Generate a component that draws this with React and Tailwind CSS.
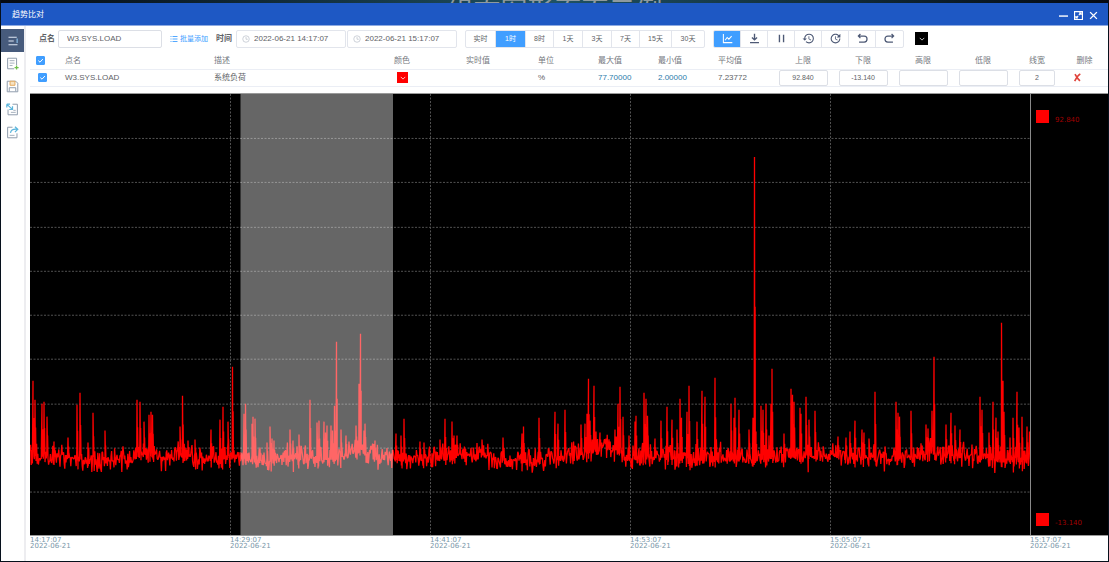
import React, { useState } from "react";
import { MdHistory, MdUpdate } from "react-icons/md";

const SPIKES = [
  [33, 380], [35, 399], [42, 403], [44, 401], [47, 416], [54, 441], [68, 437], [77, 404], [80, 392], [88, 442],
  [93, 412], [105, 430], [137, 399], [140, 401], [144, 421], [149, 414], [151, 411], [152.5, 414], [180, 426],
  [182.5, 395], [188, 440], [195, 439], [211, 429], [220, 419], [223, 406], [228, 421], [232.5, 366], [244, 413],
  [245.5, 403], [252, 423], [253, 416], [255, 418], [260, 447], [267, 442], [270, 426], [272, 438], [274, 440],
  [290, 429], [293, 440], [299, 434], [310, 399], [317, 422], [319, 420], [324, 421], [325.5, 432], [327, 425],
  [331, 425], [332.5, 430], [334.5, 405], [336.5, 341], [341, 429], [346, 435], [349, 441], [356, 425],
  [359, 383], [360.5, 333], [364, 430], [365, 423], [375, 440], [396, 433], [401, 435], [404, 418], [420, 441],
  [424, 442], [440, 439], [445, 418], [452, 421], [454, 435], [457, 435], [482, 439], [503, 437], [522, 433],
  [523.5, 426], [539, 417], [555, 411], [558, 423], [565, 409], [581, 424], [585, 423], [587, 413], [588.5, 378],
  [590, 420], [594, 385], [596, 431], [600, 432], [615, 429], [618, 403], [620, 386], [623, 416], [629, 435],
  [635, 421], [636, 415], [644, 392], [646, 398], [647.5, 415], [655, 438], [661, 420], [667, 406], [672, 419],
  [677, 429], [680, 398], [681.5, 417], [687, 411], [689, 385], [697, 421], [702, 390], [705, 396], [715, 377],
  [731, 403], [734, 417], [735, 397], [739, 409], [749, 429], [753, 417], [754.5, 156], [756, 431], [761, 405],
  [763, 409], [766, 403], [769, 435], [771, 403], [772, 368], [784, 433], [791, 388], [792.5, 394], [794, 401],
  [800, 407], [801, 413], [806, 396], [809, 419], [815, 410], [838, 436], [846, 437], [850, 431], [855, 420],
  [862, 429], [864, 432], [869, 438], [875, 391], [896, 401], [898, 412], [899.5, 416], [911, 410], [926, 424],
  [928, 428], [932, 410], [934, 356], [946, 424], [951, 412], [955, 425], [960, 429], [980, 396], [982, 409],
  [989, 432], [993, 401], [996, 417], [998, 431], [1001.5, 322], [1003, 380], [1004, 411], [1010, 437],
  [1013, 417], [1017, 391], [1019, 427], [1022, 416], [1027, 426], [1029.5, 431],
];

const BASELINE = [
  [30, 455], [60, 453], [90, 459], [110, 460], [130, 456], [150, 451], [165, 459], [180, 452], [200, 457], [232, 455],
  [250, 455], [265, 459], [300, 456], [340, 455], [358, 446], [366, 450], [380, 456], [400, 457], [440, 455],
  [460, 453], [480, 452], [495, 458], [530, 459], [560, 455], [585, 450], [600, 446], [615, 447], [625, 455],
  [650, 455], [700, 456], [740, 457], [790, 453], [830, 453], [870, 455], [890, 458], [905, 455], [920, 456],
  [928, 447], [940, 453], [970, 454], [1000, 458], [1030, 457],
];

function baselineAt(x) {
  for (let i = 1; i < BASELINE.length; i++) {
    const [x1, y1] = BASELINE[i];
    const [x0, y0] = BASELINE[i - 1];
    if (x <= x1) return y0 + ((y1 - y0) * (x - x0)) / (x1 - x0);
  }
  return 456;
}

function buildSeries() {
  let seed = 4711;
  const rand = () => {
    seed = (seed * 1664525 + 1013904223) % 4294967296;
    return seed / 4294967296;
  };
  const pts = [];
  for (let x = 30; x <= 1030; x += 0.6) {
    const n = rand() + rand() - 1;
    const burst = rand() > 0.94 ? (rand() - 0.6) * 16 : 0;
    pts.push([x, baselineAt(x) + 1 + n * 14 + burst]);
  }
  for (const [x, y] of SPIKES) {
    const b = baselineAt(x);
    pts.push([x - 0.7, b + 4], [x, y], [x + 0.6, y + (b - y) * 0.5], [x + 1, b + 2]);
  }
  pts.sort((a, b) => a[0] - b[0]);
  return pts.map(([x, y]) => `${x.toFixed(1)},${y.toFixed(1)}`).join(" ");
}

const SERIES = buildSeries();
const H_LINES = [137, 181, 226, 270, 314, 358, 403, 447, 491];
const V_LINES = [230, 430, 630, 830];
const TICKS = ["14:17:07", "14:29:07", "14:41:07", "14:53:07", "15:05:07"];
const RANGES = [
  ["实时", "w-[30px]"], ["1时", "w-[30px]"], ["8时", "w-[28px]"], ["1天", "w-[29px]"],
  ["3天", "w-[29px]"], ["7天", "w-[28px]"], ["15天", "w-[32px]"], ["30天", "w-[32px]"],
];

const S = ({ children, className = "size-[11px]", sw = 1.5 }) => (
  <svg viewBox="0 0 16 16" className={className} fill="none" stroke="currentColor" strokeWidth={sw} aria-hidden="true">
    {children}
  </svg>
);

const TOOLS = [
  ["曲线", <S><path d="M2 1.5V14h13M4.5 10.500 7.500 6.500l2.500 2.500 4-4.500" /></S>],
  ["下载", <S sw={2}><path d="M8 1v9M4.3 6.5 8 10l3.700-3.500M1.500 14h13" /></S>],
  ["暂停", <S sw={2}><path d="M5 2.500v11M11 2.500v11" /></S>],
  ["后退", <MdHistory className="size-[13px]" />],
  ["前进", <MdUpdate className="size-[13px]" />],
  ["撤销", <S sw={1.8}><path d="M5 1.500 2 4.500l3 3M2 4.500h8.500a4 4.300 0 0 1 0 8.800H3" /></S>],
  ["重做", <S sw={1.8}><path d="M11 1.500l3 3-3 3M14 4.500H5.500a4 4.300 0 0 0 0 8.800H13" /></S>],
];

const SIDE = [
  ["菜单", <S className="size-[12px]"><path d="M2 3h11M2 8h7M2 13h12" stroke="#dfe8f3" /><path d="M13.500 4.500v6" stroke="#8fc4ef" /></S>],
  ["新建", <S className="size-[13px]" sw={1.2}><path d="M10 14.500H2v-13h11V10" stroke="#8d9aab" /><path d="M4.500 4.500h6M4.500 7.500h6M4.500 10.500h3.500" stroke="#a5afbc" /><path d="M13 10.500v5M10.500 13h5" stroke="#6fbf4a" strokeWidth="1.600" /></S>],
  ["保存", <S className="size-[13px]" sw={1.2}><path d="M1.500 1.500H12l2.500 2.500v10.500h-13z" stroke="#8d9aab" /><path d="M5 1.500v5h6v-5z" stroke="#e3a95b" fill="#f6e3c4" /><path d="M4 14V9.500h8V14" stroke="#8d9aab" /></S>],
  ["导入", <S className="size-[13px]" sw={1.2}><path d="M8 1.500h6v13H2.500V8" stroke="#8d9aab" /><path d="M1 1.500h4M1 1.500v4M1.500 2l6 5.500M8 4v4H4" stroke="#5bb5dc" strokeWidth="1.500" /><path d="M9 9h3M6 11.500h6" stroke="#a5afbc" /></S>],
  ["导出", <S className="size-[13px]" sw={1.2}><path d="M8 1.500H2v13h11.500V9" stroke="#8d9aab" /><path d="M5.500 8.500C6 5 9 3.500 14 4M11 1l3.500 3L11 7.500" stroke="#5bb5dc" strokeWidth="1.500" /><path d="M4.500 11.500h6" stroke="#a5afbc" /></S>],
];

const Clock = () => (
  <S className="size-[8px] shrink-0 text-[#b4bac4]" sw={1.3}>
    <circle cx="8" cy="8" r="6.500" />
    <path d="M8 4v4.500h3.500" />
  </S>
);

const Chevron = () => (
  <S className="size-[6px]" sw={2}>
    <path d="m2 5 6 6 6-6" />
  </S>
);

function DateBox({ label, value }) {
  return (
    <label className="flex h-[18px] w-[110px] items-center gap-1 rounded-xs border border-[#e2e5ec] pl-[5px]">
      <Clock />
      <input aria-label={label} defaultValue={value} className="w-full min-w-0 outline-none" />
    </label>
  );
}

function Check({ label, className }) {
  const [on, setOn] = useState(true);
  return (
    <label className={`relative block size-[9px] ${className}`}>
      <input
        type="checkbox"
        aria-label={label}
        checked={on}
        onChange={() => setOn(!on)}
        className="block size-[9px] appearance-none rounded-[1px] border border-[#409eff] checked:bg-[#409eff]"
      />
      {on && (
        <svg viewBox="0 0 9 9" className="pointer-events-none absolute inset-0 size-[9px]" fill="none" stroke="#fff" aria-hidden="true">
          <path d="M2.300 4.600 4 6.200 6.900 3" />
        </svg>
      )}
    </label>
  );
}

const NumBox = ({ label, value, className = "w-[49px]" }) => (
  <input
    aria-label={label}
    defaultValue={value}
    className={`mx-auto block h-[16px] rounded-xs border border-[#dcdfe6] text-center text-[7px] outline-none ${className}`}
  />
);

export default function App() {
  const [range, setRange] = useState("1时");
  return (
    <div className="flex h-screen flex-col bg-[#06101c] px-px pb-px font-['Liberation_Sans','Noto_Sans_CJK_SC',sans-serif] text-[8px] leading-[12px] text-[#606266]">
      <div className="flex h-[3px] shrink-0 justify-center overflow-hidden bg-linear-to-r from-[#050a14] via-[#1f5263] to-[#050a14] text-[27px] leading-[24px] text-[#8f9a9e]">
        组态图形页面示例
      </div>
      <div className="flex min-h-0 flex-1 flex-col bg-white">
        <header className="flex h-[23px] shrink-0 items-center justify-between border-b border-[#8eaae2] bg-[#1e58c4] pt-[2px] pr-[10px] pl-[11px] text-white">
          <h1>趋势比对</h1>
          <div className="flex items-center gap-[6px]">
            <button aria-label="最小化"><S className="size-[9px]" sw={2.500}><path d="M0 9h16" /></S></button>
            <button aria-label="最大化">
              <S className="size-[9px]" sw={2}><path d="M1 1h14v14H1zM8.500 7.500l4-4M9 3.500h3.500V7M7.500 8.500l-4 4M3.500 9v3.500H7" /></S>
            </button>
            <button aria-label="关闭"><S className="size-[9px]" sw={2.500}><path d="m2 2 12 12M14 2 2 14" /></S></button>
          </div>
        </header>

        <div className="flex min-h-0 flex-1">
          <nav className="flex w-[25px] shrink-0 flex-col border-r-2 border-[#ededf0] pt-[3px]">
            {SIDE.map(([label, icon], i) => (
              <button
                key={label}
                aria-label={label}
                className={`flex h-[23px] items-center justify-center ${i === 0 ? "bg-[#475b7c]" : ""}`}
              >
                {icon}
              </button>
            ))}
          </nav>

          <main className="flex min-w-0 flex-1 flex-col pl-1">
            <div className="flex h-[25px] shrink-0 items-center pl-[9px]">
              <label htmlFor="point" className="w-[19px] font-bold">点名</label>
              <input
                id="point"
                defaultValue="W3.SYS.LOAD"
                className="h-[18px] w-[104px] rounded-xs border border-[#dcdfe6] pl-[8px] outline-none"
              />
              <button className="ml-[8px] flex items-center gap-[2px] text-[7px] text-[#409eff]">
                <S className="size-[8px]" sw={1.800}><path d="M5 3h10M5 8h10M5 13h10M1 3h2M1 8h2M1 13h2" /></S>
                批量添加
              </button>
              <span className="mr-[4px] ml-[8px] font-bold">时间</span>
              <div className="flex gap-[1px]">
                <DateBox label="开始时间" value="2022-06-21 14:17:07" />
                <DateBox label="结束时间" value="2022-06-21 15:17:07" />
              </div>
              <div className="ml-[8px] flex h-[18px] overflow-hidden rounded-xs border border-[#e2e5ec] text-[7px]">
                {RANGES.map(([name, w]) => (
                  <button
                    key={name}
                    onClick={() => setRange(name)}
                    className={`${w} border-r border-[#e2e5ec] last:border-r-0 ${range === name ? "bg-[#409eff] text-white" : ""}`}
                  >
                    {name}
                  </button>
                ))}
              </div>
              <div className="ml-[8px] flex h-[18px] overflow-hidden rounded-xs border border-[#e2e5ec] text-[#4d5975]">
                {TOOLS.map(([label, icon], i) => (
                  <button
                    key={label}
                    aria-label={label}
                    className={`flex w-[27px] items-center justify-center border-r border-[#e2e5ec] last:border-r-0 ${i === 0 ? "bg-[#409eff] text-white" : ""}`}
                  >
                    {icon}
                  </button>
                ))}
              </div>
              <button aria-label="背景颜色" className="ml-[11px] flex size-[13px] items-center justify-center bg-black text-white">
                <Chevron />
              </button>
            </div>

            <table className="w-full shrink-0 table-fixed border-collapse text-left">
              <colgroup>
                <col className="w-[35px]" /><col className="w-[149px]" /><col />
                <col className="w-[72px]" /><col className="w-[72px]" /><col className="w-[60px]" />
                <col className="w-[60px]" /><col className="w-[60px]" /><col className="w-[55px]" />
                <col className="w-[60px]" /><col className="w-[60px]" /><col className="w-[60px]" />
                <col className="w-[60px]" /><col className="w-[48px]" /><col className="w-[47px]" />
              </colgroup>
              <thead>
                <tr className="h-[18px] border-b border-[#ebeef5] text-[#74777e] *:pt-[2px] *:font-normal">
                  <th><Check label="全选" className="ml-[6px]" /></th>
                  <th>点名</th><th>描述</th><th>颜色</th><th>实时值</th><th>单位</th>
                  <th>最大值</th><th>最小值</th><th>平均值</th>
                  <th className="text-center">上限</th><th className="text-center">下限</th>
                  <th className="text-center">高限</th><th className="text-center">低限</th>
                  <th className="text-center">线宽</th><th className="text-center">删除</th>
                </tr>
              </thead>
              <tbody>
                <tr className="h-[17px] border-b border-[#ebeef5]">
                  <td><Check label="W3.SYS.LOAD" className="ml-[8px]" /></td>
                  <td>W3.SYS.LOAD</td>
                  <td>系统负荷</td>
                  <td>
                    <button aria-label="曲线颜色" className="ml-[3px] flex size-[11px] items-center justify-center bg-[#f00] text-white">
                      <Chevron />
                    </button>
                  </td>
                  <td></td>
                  <td>%</td>
                  <td className="text-[#2b7cab]">77.70000</td>
                  <td className="text-[#2b7cab]">2.00000</td>
                  <td>7.23772</td>
                  <td><NumBox label="上限" value="92.840" /></td>
                  <td><NumBox label="下限" value="-13.140" /></td>
                  <td><NumBox label="高限" value="" /></td>
                  <td><NumBox label="低限" value="" /></td>
                  <td><NumBox label="线宽" value="2" className="w-[36px]" /></td>
                  <td>
                    <button aria-label="删除" className="ml-[12px] block text-[#e0443c]">
                      <S className="size-[9px]" sw={2.800}><path d="M3.500 2c2 3 5 9 9 12M13 1.500C9 4 5 10 3 14.500" /></S>
                    </button>
                  </td>
                </tr>
              </tbody>
            </table>

            <div className="mt-[6px] flex min-h-0 flex-1 border-y border-[#9a9a9a] bg-black">
              <div className="min-w-0 flex-1">
                <svg viewBox="30 93 1000 442" preserveAspectRatio="none" className="block h-full w-full" role="img" aria-label="趋势曲线">
                  <g stroke="#525252" strokeDasharray="2 1.500">
                    {H_LINES.map((y) => <path key={y} d={`M30 ${y}.500H1030`} />)}
                    {V_LINES.map((x) => <path key={x} d={`M${x}.500 93V535`} />)}
                  </g>
                  <polyline points={SERIES} fill="none" stroke="#f00" strokeWidth="1.300" strokeLinejoin="bevel" />
                  <rect x="240.500" y="93" width="152.500" height="442" fill="#fff" fillOpacity="0.400" />
                </svg>
              </div>
              <div className="flex w-[78px] shrink-0 flex-col justify-between border-l border-[#8a8a8a] pt-[16px] pb-[9px] pl-[5px] font-['DejaVu_Sans',sans-serif] text-[7px] text-[#a00000]">
                <div className="flex items-end gap-[6px]">
                  <span className="size-[13px] bg-[#f00]" />
                  <span className="leading-[6px]">92.840</span>
                </div>
                <div className="flex items-end gap-[6px]">
                  <span className="size-[13px] bg-[#f00]" />
                  <span className="leading-[6px]">-13.140</span>
                </div>
              </div>
            </div>

            <div className="flex h-[25px] shrink-0 pt-px font-['DejaVu_Sans',sans-serif] text-[7px] leading-[6px] text-[#7896a8]">
              {TICKS.map((t) => (
                <div key={t} className="min-w-0 flex-1">{t}<br />2022-06-21</div>
              ))}
              <div className="w-[78px] shrink-0">15:17:07<br />2022-06-21</div>
            </div>
          </main>
        </div>
      </div>
    </div>
  );
}
